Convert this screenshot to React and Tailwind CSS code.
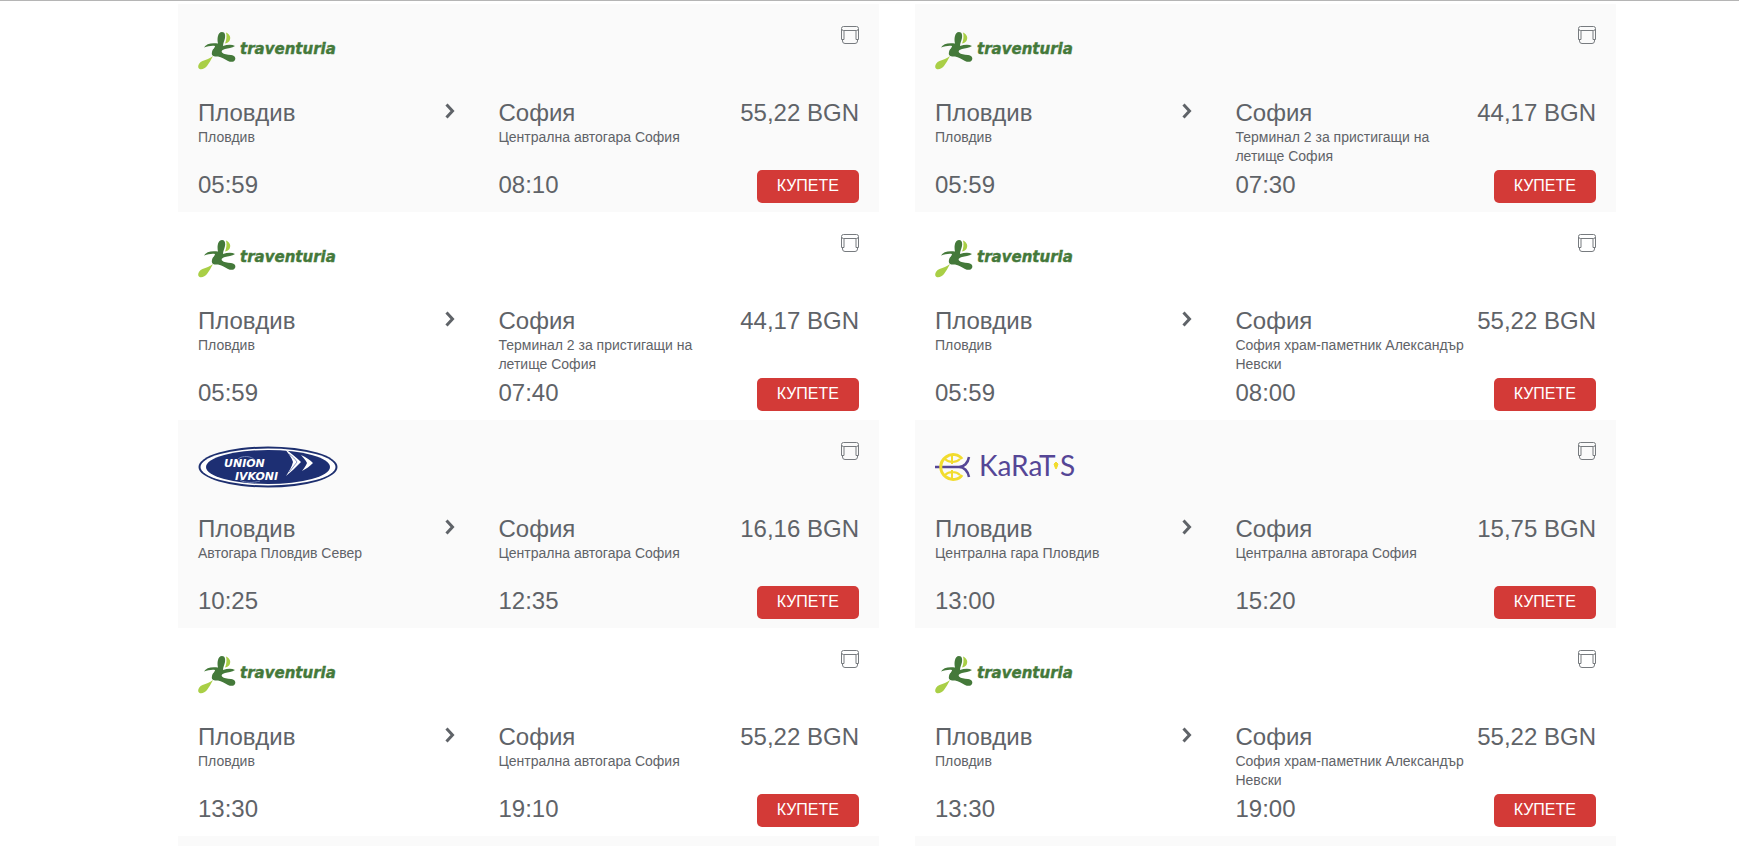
const trips = [
  { carrier: 'traventuria', fromStop: 'Пловдив', toStop: 'Централна автогара София', departs: '05:59', arrives: '08:10', price: '55,22 BGN' },
  { carrier: 'traventuria', fromStop: 'Пловдив', toStop: 'Терминал 2 за пристигащи на летище София', departs: '05:59', arrives: '07:30', price: '44,17 BGN' },
  { carrier: 'traventuria', fromStop: 'Пловдив', toStop: 'Терминал 2 за пристигащи на летище София', departs: '05:59', arrives: '07:40', price: '44,17 BGN' },
  { carrier: 'traventuria', fromStop: 'Пловдив', toStop: 'София храм-паметник Александър Невски', departs: '05:59', arrives: '08:00', price: '55,22 BGN' },
  { carrier: 'union', fromStop: 'Автогара Пловдив Север', toStop: 'Централна автогара София', departs: '10:25', arrives: '12:35', price: '16,16 BGN' },
  { carrier: 'karats', fromStop: 'Централна гара Пловдив', toStop: 'Централна автогара София', departs: '13:00', arrives: '15:20', price: '15,75 BGN' },
  { carrier: 'traventuria', fromStop: 'Пловдив', toStop: 'Централна автогара София', departs: '13:30', arrives: '19:10', price: '55,22 BGN' },
  { carrier: 'traventuria', fromStop: 'Пловдив', toStop: 'София храм-паметник Александър Невски', departs: '13:30', arrives: '19:00', price: '55,22 BGN' },
];

function TraventuriaLogo() {
  return (
    <svg width="140" height="44" viewBox="0 0 140 44" role="img" aria-label="traventuria">
      <path d="M28 4.500c3 1.500 5 4 4 7-.5 2-2 3.500-5 4 1.500-3 2-8 1-11z" fill="#a9cf46" />
      <path d="M15 28c-2 4-4 7-6 10-2 3-7 4.500-8.500 2-1-2 .5-5.500 4-7 4-1.500 7-2.500 10.500-5z" fill="#a9cf46" />
      <path
        d="M24 4c3 0 3.500 3 3 6-.5 3-2 5-2 8 4-1 8-2 12 0-3 2-7 2.500-10 3-3 1-4 2-3 3.500 2 2 5 2 9 2.500 4 .5 5 3 4 5s-4 2.500-7 1c-4-2-6-4-10-4.500-4 .5-7-.5-6-4.500.500-3 3-4 3-6-4-.5-7 .5-11 1.500 2-3.500 7-5 14-4-1-4-.5-11.500 4-11.500z"
        fill="#44793a"
      />
      <text x="42" y="26" fill="#44793a" stroke="#44793a" strokeWidth="0.4" className="font-['DejaVu_Sans'] text-[15px] font-bold italic">traventuria</text>
    </svg>
  );
}

function UnionIvkoniLogo() {
  return (
    <svg width="140" height="44" viewBox="0 0 140 44" role="img" aria-label="Union Ivkoni">
      <ellipse cx="70" cy="23" rx="69.5" ry="20.5" fill="#1d2f6f" />
      <ellipse cx="70" cy="23" rx="67.5" ry="18.5" fill="#fff" />
      <ellipse cx="70" cy="23" rx="62" ry="17" fill="#1d2f73" />
      <path d="M40 15c5-4 13-3 17 1M42 36c5 3 13 3 20 1" fill="none" stroke="#6f80b4" />
      <text x="26" y="23" fill="#fff" className="font-['DejaVu_Sans'] text-[11px] font-bold italic">UNION</text>
      <text x="37" y="36" fill="#fff" className="font-['DejaVu_Sans'] text-[11px] font-bold italic">IVKONI</text>
      <path d="M87 5c6 4 11 8 16 13-5 5-10 10-15 14 3-5 6-9 7-14-1-4-5-9-8-13z" fill="#fff" />
      <path d="M103 11c5 2 9 5 12 8-3 3-7 6-11 8 2-3 4-5 5-8-1-3-4-5-6-8z" fill="#fff" />
      <path d="M91 10c4 3 6 5 8 8l-8 10" fill="none" stroke="#8694c0" />
    </svg>
  );
}

function KaratsLogo() {
  return (
    <svg width="140" height="44" viewBox="0 0 140 44" role="img" aria-label="Karats">
      <path d="M0 23h25M34 13c-1 6-5 10-10 10 5 0 9 4 10 10" fill="none" stroke="#554696" strokeWidth="2.500" />
      <g fill="none" stroke="#f2dc2e" strokeWidth="3">
        <path d="M27 15C24 10 16 9 11 13 4 18 4 28 11 33c5 4 13 3 16-2" />
        <path d="M17 10v10M17 26v10M10 15c4 4 11 4 15 0M10 31c4-4 11-4 15 0" strokeWidth="2" />
      </g>
      <text x="44" y="32" fill="#554696" className="font-['Lato'] text-[28px]">KaRaT</text>
      <text x="125" y="32" fill="#554696" className="font-['Lato'] text-[28px]">S</text>
      <path d="M121 18l2 2-1 3-1 2-1-2-1-3z" fill="#f2dc2e" stroke="#f2dc2e" />
    </svg>
  );
}

const logos = {
  traventuria: TraventuriaLogo,
  union: UnionIvkoniLogo,
  karats: KaratsLogo,
};

function SeatIcon() {
  return (
    <svg width="18" height="18" viewBox="0 0 18 18" fill="none" stroke="#777b7f" aria-hidden="true">
      <rect x="0.5" y="0.5" width="17" height="4" rx="2" />
      <path d="M0.5 3v10.500h2.500V4.500M17.500 3v10.500H15V4.500M1.500 13.500v1.500q0 2.500 2.500 2.500h10q2.500 0 2.500-2.500v-1.500" />
    </svg>
  );
}

function Chevron() {
  return (
    <svg width="10" height="16" viewBox="0 0 10 16" fill="none" stroke="#5f6368" strokeWidth="3" aria-hidden="true">
      <path d="M1.500 1.500l6 6.500-6 6.500" />
    </svg>
  );
}

function TripCard({ trip, shaded }) {
  const Logo = logos[trip.carrier];

  return (
    <article className={`px-5 pt-5 pb-[9px] ${shaded ? 'bg-[#fafafa]' : 'bg-white'}`}>
      <div className="flex h-[74px] items-start justify-between">
        <div className="pt-1">
          <Logo />
        </div>
        <div className="pt-0.5">
          <SeatIcon />
        </div>
      </div>

      <div className="grid grid-cols-[5fr_4fr_2fr]">
        <div>
          <div className="flex items-start justify-between pr-[43px]">
            <h2 className="text-2xl leading-[30px]">Пловдив</h2>
            <div className="pt-[5px]">
              <Chevron />
            </div>
          </div>
          <p className="min-h-[42px] text-sm leading-[19px]">{trip.fromStop}</p>
          <p className="pb-[3px] text-2xl leading-[30px]">{trip.departs}</p>
        </div>
        <div>
          <h2 className="text-2xl leading-[30px]">София</h2>
          <p className="min-h-[42px] text-sm leading-[19px]">{trip.toStop}</p>
          <p className="pb-[3px] text-2xl leading-[30px]">{trip.arrives}</p>
        </div>
        <div className="flex flex-col items-end justify-between">
          <p className="text-2xl leading-[30px] whitespace-nowrap">{trip.price}</p>
          <button type="button" className="h-[33px] rounded-[5px] bg-[#d33a37] px-5 pb-0.5 text-base text-white">
            КУПЕТЕ
          </button>
        </div>
      </div>
    </article>
  );
}

function App() {
  return (
    <main className="flex min-h-screen flex-col border-t border-[#b5b5b5] bg-white pt-[3px] pr-[123px] pl-[178px] font-['Liberation_Sans',Arial,sans-serif] text-[#5f6368]">
      <div className="grid grid-cols-2 gap-x-9">
        {trips.map((trip, i) => (
          <TripCard key={i} trip={trip} shaded={Math.floor(i / 2) % 2 === 0} />
        ))}
      </div>
      <div className="grid flex-1 grid-cols-2 gap-x-9">
        <div className="bg-[#fafafa]" />
        <div className="bg-[#fafafa]" />
      </div>
    </main>
  );
}

export default App;
